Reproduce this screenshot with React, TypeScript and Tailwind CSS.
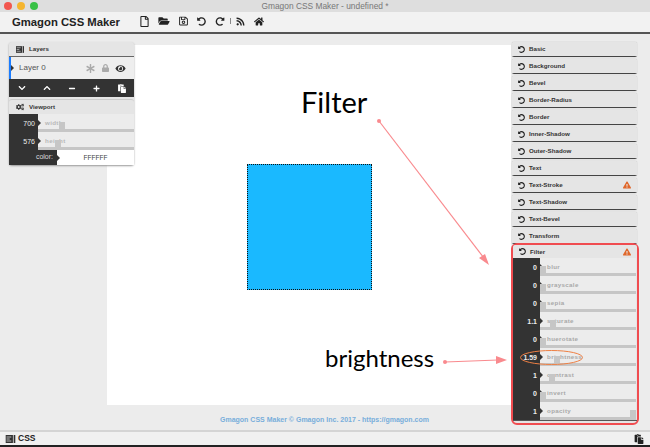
import { FaRegFile, FaFolderOpen, FaRegSave, FaUndoAlt, FaRedoAlt, FaRss, FaHome, FaEye, FaLock, FaAsterisk, FaChevronDown, FaChevronUp, FaMinus, FaPlus, FaPaste, FaCogs, FaExclamationTriangle } from "react-icons/fa";

const sections = ["Basic", "Background", "Bevel", "Border-Radius", "Border", "Inner-Shadow", "Outer-Shadow", "Text", "Text-Stroke", "Text-Shadow", "Text-Bevel", "Transform"];

const filters = [
  { v: "0", n: "blur", t: 0 },
  { v: "0", n: "grayscale", t: 0 },
  { v: "0", n: "sepia", t: 0 },
  { v: "1.1", n: "saturate", t: 10 },
  { v: "0", n: "huerotate", t: 0 },
  { v: "1.59", n: "brightness", t: 14 },
  { v: "1", n: "contrast", t: 9 },
  { v: "0", n: "invert", t: 0 },
  { v: "1", n: "opacity", t: 90 },
];

function ListIcon({ className }: { className: string }) {
  return (
    <svg viewBox="0 0 12 10" className={className}>
      <rect width="12" height="10" fill="#333" />
      <rect x="1" y="2" width="6" height="1" fill="#ddd" />
      <rect x="1" y="4.5" width="4" height="1" fill="#ddd" />
      <rect x="1" y="7" width="6" height="1" fill="#ddd" />
      <rect x="9" y="0" width="1" height="10" fill="#ddd" />
    </svg>
  );
}

function Notch({ top = 6 }: { top?: number }) {
  return <span className="absolute left-0 border-y-[3px] border-l-[3px] border-y-transparent border-l-[#333]" style={{ top }} />;
}

function Slider({ v, n, t, dark = 27, bold = true }: { v: string; n: string; t: number; dark?: number; bold?: boolean }) {
  return (
    <div className="flex h-[18px]">
      <div className={`shrink-0 bg-[#333] pr-[3px] pt-[3px] text-right text-[7px] leading-[13px] text-[#eee] ${bold ? "font-bold" : "font-normal"}`} style={{ width: dark }}>{v}</div>
      <div className="relative flex-1 bg-[#ececec]">
        <Notch />
        <div className={`pl-[7px] pt-[4px] text-[6.2px] font-bold leading-[10px] tracking-[0.35px] ${bold ? "text-[#a8a8a8]" : "text-[#b8b8b8]"}`}>{n}</div>
        <div className="absolute inset-x-0 bottom-0 h-[3px] bg-[#c6c6c6]" />
        <div className="absolute bottom-0 h-[10px] w-[6px] bg-[#c6c6c6]" style={{ left: t }} />
      </div>
    </div>
  );
}

function SectionHead({ name, warn, small }: { name: string; warn?: boolean; small?: boolean }) {
  return (
    <div className={`flex items-center rounded-t-[2px] bg-[#e5e5e5] px-[6px] ${small ? "h-[13px]" : "h-[14px]"}`}>
      <FaUndoAlt className="mr-[4px] h-[7px] w-[7px] text-[#222]" />
      <span className="flex-1 text-[6.2px] font-bold text-[#333]">{name}</span>
      {warn && <FaExclamationTriangle className="h-[8px] w-[8px] text-[#e0672a]" />}
    </div>
  );
}

export default function App() {
  return (
    <div className="relative flex h-[447px] w-[650px] flex-col overflow-hidden bg-[#ececec] font-['Liberation_Sans',sans-serif]">
      <div className="relative flex h-[12px] items-center justify-center bg-[#dedede]">
        <div className="absolute left-[4px] top-[2px] flex gap-[5px]">
          <span className="h-[8px] w-[8px] rounded-full bg-[#f2574f]" />
          <span className="h-[8px] w-[8px] rounded-full bg-[#f5b52f]" />
          <span className="h-[8px] w-[8px] rounded-full bg-[#38c146]" />
        </div>
        <span className="text-[8.4px] text-[#777]">Gmagon CSS Maker - undefined *</span>
      </div>
      <div className="flex h-[22px] items-center border-b-2 border-[#555] bg-[#f2f2f2] pl-[12px]">
        <span className="w-[128px] text-[11.3px] font-bold text-[#222]">Gmagon CSS Maker</span>
        <div className="-mt-[2px] flex items-center gap-[9px] text-[#222]">
          <FaRegFile className="h-[11px] w-[9px]" />
          <FaFolderOpen className="h-[10px] w-[12px]" />
          <FaRegSave className="h-[10px] w-[9px]" />
          <FaUndoAlt className="h-[9px] w-[9px]" />
          <FaRedoAlt className="h-[9px] w-[10px]" />
          <span className="-mx-[4px] h-[6px] w-px bg-[#888]" />
          <FaRss className="h-[9px] w-[9px]" />
          <FaHome className="h-[9px] w-[10px]" />
        </div>
      </div>

      <div className="relative flex h-[396px] pt-[11px]">
        <div className="w-[107px] shrink-0" />
        <div className="flex w-[404px] shrink-0 flex-col">
          <div className="relative h-[360px] bg-white">
            <div className="absolute left-[140px] top-[119px] h-[126px] w-[125px] border border-dotted border-[#111] bg-[#1ab9ff]" />
            <span className="absolute left-[194px] top-[39px] font-['Lato',sans-serif] text-[29px] leading-[36px] text-black">Filter</span>
            <span className="absolute left-[218px] top-[298px] font-['Lato',sans-serif] text-[24px] leading-[30px] text-black">brightness</span>
          </div>
          <div className="whitespace-nowrap pl-[31px] pt-[9px] text-center text-[7px] font-bold leading-[12px] text-[#78aedb]">Gmagon CSS Maker © Gmagon Inc. 2017 - https://gmagon.com</div>
        </div>
        <div className="-mt-[3px] flex flex-1 flex-col">
          <div className="ml-px flex w-[125px] flex-col gap-[2px]">
            {sections.map((s) => (
              <div key={s} className="rounded-[2px] border-b border-[#444] shadow-[0_0_1px_#999]">
                <SectionHead name={s} warn={s === "Text-Stroke"} />
              </div>
            ))}
          </div>
          <div className="-mt-px w-[128px] rounded-[6px] border-2 border-[#f04c50] bg-[#e5e5e5] pb-[2px]">
            <SectionHead name="Filter" warn small />
            <div className="border-b border-[#555] pr-px">
              {filters.map((f) => (
                <Slider key={f.n} v={f.v} n={f.n} t={f.t} />
              ))}
            </div>
          </div>
        </div>

        <div className="absolute left-[9px] top-[8px] w-[125px] rounded-[3px] bg-[#e5e5e5] shadow-[0_1px_2px_#999]">
          <div className="flex h-[15px] items-center border-b border-[#666] pl-[7px]">
            <ListIcon className="mr-[5px] h-[7px] w-[8px]" />
            <span className="text-[6.2px] font-bold text-[#333]">Layers</span>
          </div>
          <div className="relative flex h-[22px] items-center border-l-2 border-[#1a7cff] bg-[#eeeeee] pl-[8px] pr-[8px]">
            <Notch top={8} />
            <span className="flex-1 text-[8px] text-[#555]">Layer 0</span>
            <FaAsterisk className="mr-[7px] h-[9px] w-[9px] text-[#aaa]" />
            <FaLock className="mr-[6px] h-[8px] w-[7px] text-[#aaa]" />
            <FaEye className="h-[9px] w-[11px] text-[#333]" />
          </div>
          <div className="flex h-[18px] items-center justify-between bg-[#333] pl-[9px] pr-[7px] text-white">
            <FaChevronDown className="h-[8px] w-[8px]" />
            <FaChevronUp className="h-[8px] w-[8px]" />
            <FaMinus className="h-[7px] w-[8px]" />
            <FaPlus className="h-[7px] w-[7px]" />
            <FaPaste className="h-[9px] w-[10px]" />
          </div>
          <div className="mt-[2px] flex h-[15px] items-center rounded-t-[3px] border-t border-[#ccc] bg-[#e5e5e5] pl-[7px]">
            <FaCogs className="mr-[5px] h-[8px] w-[8px] text-[#333]" />
            <span className="text-[6.2px] font-bold text-[#333]">Viewport</span>
          </div>
          <Slider v="700" n="width" t={21} dark={29} bold={false} />
          <Slider v="576" n="height" t={17} dark={29} bold={false} />
          <div className="flex h-[15px]">
            <div className="w-[48px] bg-[#333] pr-[4px] text-right text-[7px] leading-[14px] text-[#ddd]">color:</div>
            <div className="relative flex-1 bg-white text-center text-[6.5px] leading-[15px] text-[#444]">
              <Notch top={5} />
              FFFFFF
            </div>
          </div>
        </div>
      </div>

      <div className="flex h-[15px] items-center border-t-2 border-[#d4d4d4] bg-[#f0f0f0] pl-[5px] pr-[6px]">
        <ListIcon className="mr-[2px] h-[8px] w-[11px]" />
        <span className="flex-1 text-[8.5px] font-bold text-[#222]">CSS</span>
        <FaPaste className="h-[10px] w-[10px] text-[#222]" />
      </div>
      <div className="h-[2px] bg-[#222]" />

      <svg className="pointer-events-none absolute inset-0 h-full w-full" viewBox="0 0 650 447">
        <circle cx="379" cy="121" r="2" fill="#f98a8e" />
        <line x1="379" y1="121" x2="487" y2="262" stroke="#f98a8e" strokeWidth="1.2" />
        <polygon points="489,265 479,258 485,254" fill="#f98a8e" />
        <circle cx="445" cy="362" r="2" fill="#f98a8e" />
        <line x1="445" y1="362" x2="498" y2="360" stroke="#f98a8e" strokeWidth="1.2" />
        <polygon points="507,360 496,356 496,364" fill="#f98a8e" />
        <ellipse cx="551.5" cy="357.5" rx="31" ry="7" fill="none" stroke="#ee8044" strokeWidth="1" />
      </svg>
    </div>
  );
}
